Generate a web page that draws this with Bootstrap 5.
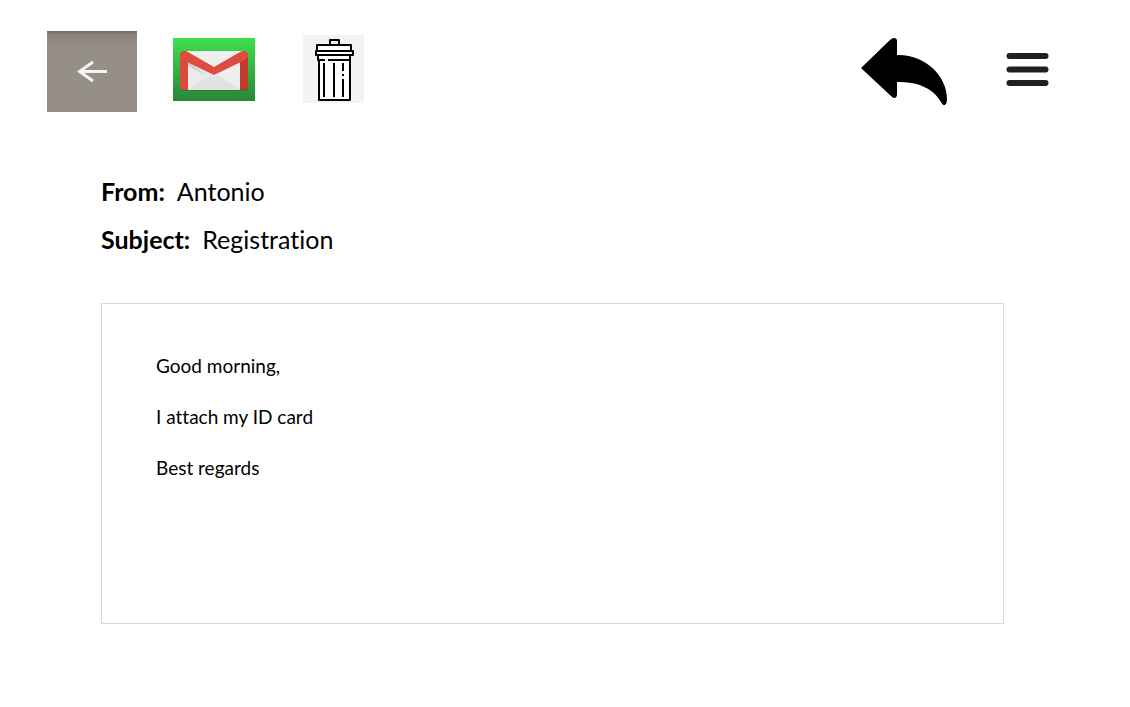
<!DOCTYPE html>
<html lang="en">
<head>
<meta charset="utf-8">
<meta name="viewport" content="width=device-width, initial-scale=1">
<title>Registration</title>
<link rel="stylesheet" href="https://cdn.jsdelivr.net/npm/bootstrap@5.3.0/dist/css/bootstrap.min.css">
<style>
  body { font-family: Lato, "Liberation Sans", sans-serif; font-variant-ligatures: none; color: #000; background: #fff; }
  .toolbar { padding: 31px 81px 0 47px; }
  .tool { display: flex; align-items: center; height: 77px; padding: 0; border: 0; background: none; }
  .tool svg { display: block; }
  .tool-back { width: 90px; height: 81px; justify-content: center; background: linear-gradient(#6f6963, #8a847d 4px, #958f88 16px); }
  .gap-mail { margin-left: 36px; }
  .gap-trash { margin-left: 48px; }
  .gap-menu { margin-left: 59px; }
  .message { padding: 63px 126px 0 101px; }
  .headers { font-size: 25px; line-height: 32px; }
  .headers dt, .headers dd { margin: 0; }
  .letter { margin-top: 48px; min-height: 321px; padding: 48px 54px; border: 1px solid #d9d9d9; font-size: 19px; line-height: 27px; }
  .letter p { margin: 0 0 24px; }
</style>
</head>
<body>
<header class="toolbar d-flex align-items-start">
  <button type="button" class="tool tool-back" aria-label="Back">
    <svg width="90" height="81" viewBox="0 0 90 81" fill="none" stroke="#f5f5f4" stroke-width="3"><path d="M60 40.500H33M46 31 32.500 40.500 46 50"/></svg>
  </button>
  <button type="button" class="tool gap-mail" aria-label="Mail">
    <svg width="82" height="63" viewBox="0 0 82 63">
      <defs>
        <linearGradient id="green" x1="0" y1="0" x2="0" y2="1"><stop offset="0" stop-color="#40df4c"/><stop offset=".45" stop-color="#35b744"/><stop offset="1" stop-color="#288638"/></linearGradient>
        <linearGradient id="fold" x1="0" y1="0" x2="1" y2="1"><stop offset="0" stop-color="#c4c4c4"/><stop offset="1" stop-color="#eeeeee"/></linearGradient>
      </defs>
      <path fill="url(#green)" d="M0 0h82v63H0z"/>
      <rect x="7" y="14" width="68" height="39" rx="3" fill="#256f30" opacity=".6"/>
      <path fill="#efefef" d="M14 13h54v39H14z"/>
      <path fill="#ebebeb" d="M14 21 41 38 14 52z"/>
      <path fill="#e2e2e2" d="M14 52 37 37l4 2 4-2 23 15z"/>
      <path fill="url(#fold)" d="m14 23 23 15-3 2L14 27z"/>
      <path fill="#d94b3f" d="M7 16h8v36h-5q-3 0-3-3z"/>
      <path fill="#c13b2c" d="M67 16h8v33q0 3-3 3h-5z"/>
      <path fill="#dc4c40" d="M7 18q0-5 4-5 2 0 4 1l26 15 26-15q2-1 4-1 4 0 4 5-1 3-5 5L41 37 12 23q-4-2-5-5z"/>
    </svg>
  </button>
  <button type="button" class="tool gap-trash" aria-label="Delete">
    <svg width="61" height="69" viewBox="0 0 61 69">
      <defs><pattern id="hatch" width="4" height="4" patternUnits="userSpaceOnUse"><path d="M0 4 4 0" stroke="#ededed"/></pattern></defs>
      <path fill="#f5f5f5" d="M0 0h61v68H0z"/><path fill="url(#hatch)" d="M0 0h61v68H0z"/>
      <path fill="#fff" d="M13 10h34v7l2 1v4h-2v43H15V22h-2v-4z"/>
      <g fill="none" stroke="#000" stroke-width="2" stroke-linejoin="round">
        <path d="M27 10V5h9v5M14 16v-6h34v6"/>
        <path d="M13 16h37v4H13z"/>
        <path d="M15 21v4h32v-4M16 25v40h31V25"/>
        <path d="M21 28v34M31 28v34M40 28v8M40 39v2M40 44v18"/>
      </g>
      <path d="M22 25h3" stroke="#fff" stroke-width="2"/>
    </svg>
  </button>
  <button type="button" class="tool ms-auto" aria-label="Reply">
    <svg width="86" height="70" viewBox="0 0 86 70"><path d="M0 33 29 5q2-2 4-2 3 0 3 3v14c28-1 50 21 50 44 0 7-4 8-6 3C71 52 56 47 36 47v12q0 4-3 4-1 0-3-2z"/></svg>
  </button>
  <button type="button" class="tool gap-menu" aria-label="Menu">
    <svg width="43" height="35" viewBox="0 0 43 35" stroke="#211f20" stroke-width="6" stroke-linecap="round"><path d="M3.500 4h36M3.500 17.500h36M3.500 31h36"/></svg>
  </button>
</header>
<main class="message">
  <dl class="headers mb-0">
    <div class="d-flex gap-2 mb-3"><dt>From:</dt><dd class="ms-1">Antonio</dd></div>
    <div class="d-flex gap-2"><dt>Subject:</dt><dd class="ms-1">Registration</dd></div>
  </dl>
  <article class="letter">
    <p>Good morning,</p>
    <p>I attach my ID card</p>
    <p>Best regards</p>
  </article>
</main>
<script src="https://cdn.jsdelivr.net/npm/bootstrap@5.3.0/dist/js/bootstrap.bundle.min.js"></script>
</body>
</html>
